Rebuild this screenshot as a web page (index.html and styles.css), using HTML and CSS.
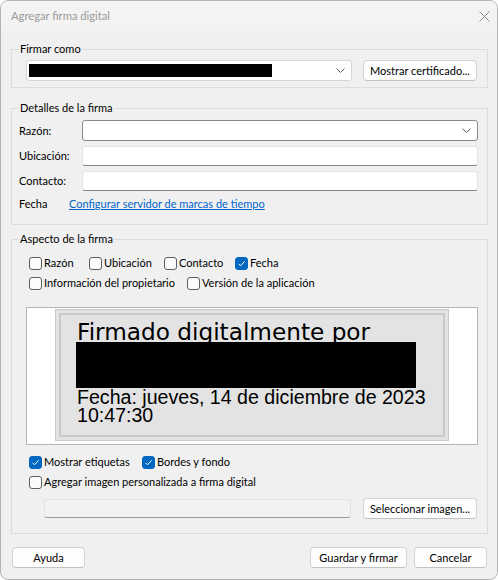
FILE: index.html
```html
<!DOCTYPE html>
<html lang="es">
<head>
<meta charset="utf-8">
<title>Agregar firma digital</title>
<link rel="stylesheet" href="styles.css">
</head>
<body>
<div class="window">
  <div class="titlebar">
    <span class="title">Agregar firma digital</span>
    <svg class="close" width="11" height="11" viewBox="0 0 11 11"><path d="M0.5 0.5L10.5 10.5M10.5 0.5L0.5 10.5" stroke="#8c8c8c" stroke-width="1" fill="none"/></svg>
  </div>
  <div class="content">
    <fieldset class="group g-sign">
      <legend>Firmar como</legend>
      <div class="row-cert">
        <div class="combo combo-cert">
          <span class="redact-cert"></span>
          <svg class="chev" width="9" height="5" viewBox="0 0 9 5"><path d="M0.5 0.5L4.5 4.5L8.5 0.5" stroke="#606060" stroke-width="1" fill="none"/></svg>
        </div>
        <button class="btn btn-side">Mostrar certificado...</button>
      </div>
    </fieldset>

    <fieldset class="group g-details">
      <legend>Detalles de la firma</legend>
      <div class="field-row">
        <span class="lbl">Razón:</span>
        <div class="combo combo-reason">
          <svg class="chev" width="9" height="5" viewBox="0 0 9 5"><path d="M0.5 0.5L4.5 4.5L8.5 0.5" stroke="#606060" stroke-width="1" fill="none"/></svg>
        </div>
      </div>
      <div class="field-row gap-row">
        <span class="lbl">Ubicación:</span>
        <div class="textbox"></div>
      </div>
      <div class="field-row gap-row">
        <span class="lbl">Contacto:</span>
        <div class="textbox"></div>
      </div>
      <div class="date-row">
        <span class="lbl lbl-date">Fecha</span>
        <a class="link">Configurar servidor de marcas de tiempo</a>
      </div>
    </fieldset>

    <fieldset class="group g-appearance">
      <legend>Aspecto de la firma</legend>
      <div class="checks">
        <div class="cb-row">
          <label class="cb-item w-razon"><span class="cb"></span>Razón</label>
          <label class="cb-item w-ubic"><span class="cb"></span>Ubicación</label>
          <label class="cb-item w-contacto"><span class="cb"></span>Contacto</label>
          <label class="cb-item"><span class="cb on"><svg width="11" height="11" viewBox="0 0 11 11"><path d="M2.5 5.8L4.5 7.8L8.6 3.4" stroke="#fff" stroke-width="1" fill="none"/></svg></span>Fecha</label>
        </div>
        <div class="cb-row cb-row-next">
          <label class="cb-item w-info"><span class="cb"></span>Información del propietario</label>
          <label class="cb-item"><span class="cb"></span>Versión de la aplicación</label>
        </div>
      </div>

      <div class="preview">
        <div class="sig">
          <div class="sig-inner">
            <div class="sig-title">Firmado digitalmente por</div>
            <div class="sig-redact"></div>
            <div class="sig-date">Fecha: jueves, 14 de diciembre de 2023</div>
            <div class="sig-date">10:47:30</div>
          </div>
        </div>
      </div>

      <div class="checks checks-bottom">
        <div class="cb-row">
          <label class="cb-item w-mostrar"><span class="cb on"><svg width="11" height="11" viewBox="0 0 11 11"><path d="M2.5 5.8L4.5 7.8L8.6 3.4" stroke="#fff" stroke-width="1" fill="none"/></svg></span>Mostrar etiquetas</label>
          <label class="cb-item"><span class="cb on"><svg width="11" height="11" viewBox="0 0 11 11"><path d="M2.5 5.8L4.5 7.8L8.6 3.4" stroke="#fff" stroke-width="1" fill="none"/></svg></span>Bordes y fondo</label>
        </div>
        <div class="cb-row cb-row-next">
          <label class="cb-item"><span class="cb"></span>Agregar imagen personalizada a firma digital</label>
        </div>
      </div>

      <div class="row-image">
        <div class="textbox textbox-disabled"></div>
        <button class="btn btn-side">Seleccionar imagen...</button>
      </div>
    </fieldset>
  </div>

  <div class="footer">
    <button class="btn btn-foot">Ayuda</button>
    <div class="footer-right">
      <button class="btn btn-save">Guardar y firmar</button>
      <button class="btn btn-foot">Cancelar</button>
    </div>
  </div>
</div>
</body>
</html>
```
FILE: styles.css
```css
* { box-sizing: border-box; }

html, body {
  margin: 0;
  padding: 0;
  background: #ffffff;
}

body {
  font-family: Lato, "Liberation Sans", sans-serif;
  font-size: 11px;
  color: #000000;
}

.window {
  width: 498px;
  height: 580px;
  border: 1px solid #b4b4b4;
  border-radius: 8px;
  background: #f0f0f0;
  overflow: hidden;
  display: flex;
  flex-direction: column;
}

.titlebar {
  height: 30px;
  flex: none;
  background: #f3f3f3;
  display: flex;
  align-items: center;
  padding: 0 7px 0 10px;
}

.title {
  flex: 1;
  color: #9a9a9a;
  font-size: 11.2px;
  line-height: 16px;
}

.close { display: block; }

.content {
  padding: 10px 9px 0 10px;
}

.group {
  margin: 0;
  min-width: 0;
  border: 1px solid #dcdcdc;
  padding: 0 9px 0 7px;
}

.group legend {
  padding: 0 1px;
  margin: 0;
  line-height: 16px;
  height: 16px;
}

/* Firmar como */
.g-sign { padding-top: 3px; padding-bottom: 6px; }

.row-cert {
  display: flex;
  align-items: center;
  padding-left: 7px;
}

.combo {
  height: 21px;
  background: #ffffff;
  border: 1px solid #d6d6d6;
  border-radius: 3px;
  display: flex;
  align-items: center;
}

.combo .chev {
  display: block;
  margin-left: auto;
  margin-right: 6px;
}

.combo-cert { width: 326px; }

.redact-cert {
  display: block;
  width: 243px;
  height: 13px;
  margin-left: 2px;
  background: #000000;
}

.btn {
  font-family: inherit;
  font-size: 11px;
  color: #000000;
  height: 21px;
  padding: 0;
  background: #fdfdfd;
  border: 1px solid #d3d3d3;
  border-bottom-color: #c2c2c2;
  border-radius: 4px;
  line-height: 17px;
  text-align: center;
  white-space: nowrap;
}

.btn-side {
  width: 114px;
  margin-left: auto;
  margin-right: 1px;
}

/* Detalles */
.g-details {
  margin-top: 12px;
  padding-top: 4px;
  padding-bottom: 10px;
}

.field-row {
  display: flex;
  align-items: center;
}

.gap-row { margin-top: 5px; }

.lbl {
  width: 63px;
  flex: none;
  line-height: 16px;
}

.combo-reason {
  flex: 1;
  border-color: #8a8a8a;
}

.textbox {
  flex: 1;
  height: 20px;
  background: #ffffff;
  border: 1px solid #e4e4e4;
  border-bottom-color: #868686;
  border-radius: 3px;
}

.date-row {
  display: flex;
  align-items: center;
  height: 20px;
  margin-top: 3px;
}

.lbl-date { width: 50px; }

.link {
  color: #0066cc;
  text-decoration: underline;
  line-height: 16px;
}

/* Aspecto */
.g-appearance {
  margin-top: 6px;
  padding-top: 8px;
  padding-bottom: 15px;
}

.checks { padding-left: 10px; }

.checks-bottom { margin-top: 9px; }

.cb-row {
  display: flex;
  height: 16px;
  align-items: center;
}

.cb-row-next { margin-top: 4px; }

.cb-item {
  display: flex;
  align-items: center;
  flex: none;
  line-height: 16px;
  white-space: nowrap;
}

.cb {
  width: 13px;
  height: 13px;
  flex: none;
  margin-right: 2px;
  border: 1px solid #5e5e5e;
  border-radius: 3px;
  background: #fbfbfb;
  display: flex;
  align-items: center;
  justify-content: center;
}

.cb svg { display: block; }

.cb.on {
  background: #0067c0;
  border-color: #0067c0;
}

.w-razon { width: 60px; }
.w-ubic { width: 75px; }
.w-contacto { width: 71px; }
.w-info { width: 158px; }
.w-mostrar { width: 113px; }

.preview {
  margin-top: 16px;
  margin-left: 7px;
  width: 452px;
  height: 138px;
  background: #ffffff;
  border: 1px solid #b4b4b4;
  display: flex;
  justify-content: center;
  align-items: flex-start;
  padding-top: 1px;
}

.sig {
  width: 394px;
  height: 132px;
  background: #e3e3e3;
  border: 1px solid #c8c8c8;
  padding: 3px;
}

.sig-inner {
  height: 100%;
  border: 2px solid #cacaca;
  padding: 5px 0 0 16px;
}

.sig-title {
  font-family: "DejaVu Sans", sans-serif;
  font-size: 23.2px;
  line-height: 23px;
  white-space: nowrap;
}

.sig-redact {
  width: 340px;
  height: 46px;
  margin-left: -1px;
  margin-top: -1px;
  background: #000000;
}

.sig-date {
  font-family: "Liberation Sans", Arial, sans-serif;
  font-size: 19.6px;
  line-height: 18px;
  white-space: nowrap;
}

.row-image {
  display: flex;
  align-items: center;
  margin-top: 8px;
  padding-left: 25px;
  height: 20px;
}

.textbox-disabled {
  flex: none;
  width: 307px;
  height: 19px;
  background: #f2f2f2;
  border-color: #e2e2e2;
  border-bottom-color: #9a9a9a;
}

/* Footer */
.footer {
  margin-top: auto;
  display: flex;
  padding: 0 10px 11px 11px;
}

.footer-right {
  margin-left: auto;
  display: flex;
  gap: 7px;
}

.btn-foot { width: 73px; }
.btn-save { width: 97px; }
```
